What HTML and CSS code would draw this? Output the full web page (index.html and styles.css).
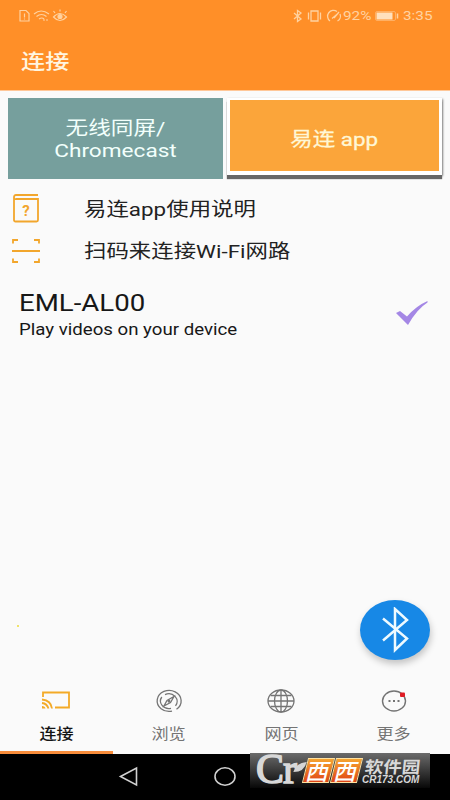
FILE: index.html
```html
<!DOCTYPE html>
<html lang="zh-CN">
<head>
<meta charset="utf-8">
<title>连接</title>
<link rel="stylesheet" href="styles.css">
</head>
<body>
<div class="screen">
  <header class="header">
    <div class="status">
      <svg class="status-left" width="50" height="14" viewBox="0 0 50 14" fill="none" stroke="currentColor" stroke-width="1.2">
        <path d="M1 1.500h6l3 3v7.500h-9zM5.500 4.500v4M5.500 9.500v1"/>
        <path d="M15 5q7-6 15 0M17.500 7.500q5-4 10 0M20 10q3-2 5 0"/>
        <path d="M24 11h6" stroke-dasharray="2 1"/>
        <path d="M34.500 8q6.500-7 13 0q-6.500 7-13 0zM36 4l-1.500-2M41 2.500v-2M46 4l1.500-2"/>
        <circle cx="41" cy="7.500" r="2" fill="currentColor"/>
      </svg>
      <div class="status-right">
        <svg width="51" height="14" viewBox="0 0 51 14" fill="none" stroke="currentColor" stroke-width="1.300">
          <path d="M2 4l7 6-3.500 2.500v-11l3.500 2.500-7 6"/>
          <path d="M19 2h7v10h-7zM16.500 3.500v7M28.500 3.500v7" />
          <path d="M38 12a5.500 5.500 0 1 1 7-9.500M48 5a5.500 5.500 0 0 1-2.500 7M40 9.500l6-5M42 9l5-6"/>
        </svg>
        <span class="battery-text"><span class="wide">92%</span></span>
        <svg class="battery" width="24" height="10" viewBox="0 0 24 10"><rect x=".5" y=".5" width="20" height="9" rx="1.500" fill="none" stroke="currentColor" opacity=".5"/><path d="M1.500 1.500h16v7h-16z" fill="#ffe0bd"/><path d="M22.500 2.500v5" stroke="currentColor" stroke-width="1.500"/></svg>
        <span class="clock"><span class="wide">3:35</span></span>
      </div>
    </div>
    <h1 class="title"><span class="wide">连接</span></h1>
  </header>

  <div class="modes">
    <div class="mode mode-cast"><span class="mid">无线同屏/<br>Chromecast</span></div>
    <div class="mode mode-app"><span class="mid">易连 app</span></div>
  </div>

  <main class="content">
    <div class="option">
      <svg class="option-icon" width="30" height="32" viewBox="0 0 30 32" fill="none" stroke="currentColor" stroke-width="1.800">
        <path d="M26 2H4q-2 0-2 2.300T4 6h22v21q0 1.500-1.500 1.500h-21Q2 28.500 2 27V4"/>
        <text x="14" y="22.500" class="question">?</text>
      </svg>
      <span class="wide">易连app使用说明</span>
    </div>
    <div class="option option-scan">
      <svg class="option-icon" width="30" height="32" viewBox="0 0 30 32" fill="none" stroke="currentColor" stroke-width="1.800">
        <path d="M1 8.500V5h5M22 5h5v3.500M1 23.500V27h5M22 27h5v-3.500M0 16h28"/>
      </svg>
      <span class="wide">扫码来连接Wi-Fi网路</span>
    </div>
    <div class="device">
      <div class="device-text">
        <div class="device-name"><span class="wide">EML-AL00</span></div>
        <div class="device-note"><span class="wide">Play videos on your device</span></div>
      </div>
      <svg class="check" width="34" height="26" viewBox="0 0 34 26"><path d="M0 12l4-2 7 5.500Q20 5 31.500 0v1.500Q21 8 12 24z" fill="#a487e5"/></svg>
    </div>
    <i class="speck"></i>
    <div class="fab">
      <svg width="28" height="46" viewBox="0 0 28 46" fill="none" stroke="#eefaff" stroke-width="2.500"><path d="M2 11.500l24 20L14 43V2l12 11L2 33.500"/></svg>
    </div>
  </main>

  <nav class="tabs">
    <div class="tab tab-active">
      <svg class="cast" width="30" height="26" viewBox="0 0 30 26" fill="none" stroke="currentColor" stroke-width="1.800"><path d="M2 9V4.500h26v15H14"/><path d="M1 11.500q9 1 10 9M1 15q5 .5 6.500 5.500"/><path d="M1 18q3 0 3.500 2.500H1z" fill="currentColor" stroke="none"/></svg>
      <span class="mid">连接</span>
    </div>
    <div class="tab">
      <svg width="30" height="26" viewBox="0 0 30 26" fill="none" stroke="currentColor" stroke-width="1.300"><path d="M18 23.100A12 10.500 0 1 1 22.500 21.200"/><path d="M7.800 9A8.500 7.500 0 0 0 17 20.300M11 6.600A8.500 7.500 0 0 1 21.500 17.800"/><path d="M20 8.500l-3.500 6-6.500 3.500 3-5.500z"/><circle cx="15" cy="13.200" r=".8"/></svg>
      <span class="mid">浏览</span>
    </div>
    <div class="tab">
      <svg width="30" height="26" viewBox="0 0 30 26" fill="none" stroke="currentColor" stroke-width="1.300"><ellipse cx="15" cy="13" rx="13" ry="11"/><ellipse cx="15" cy="13" rx="6.500" ry="11"/><path d="M15 2v22M2 13h26M4.500 7.500h21M4.500 18.500h21"/></svg>
      <span class="mid">网页</span>
    </div>
    <div class="tab">
      <svg width="30" height="26" viewBox="0 0 30 26" fill="none" stroke="currentColor" stroke-width="1.400"><ellipse cx="15" cy="13" rx="11.500" ry="10"/><path d="M9.500 13h2M14 13h2M18.500 13h2" stroke-width="2"/><rect x="21" y="4.500" width="5" height="4.500" rx="1" fill="#e01c24" stroke="none"/></svg>
      <span class="mid">更多</span>
    </div>
  </nav>

  <footer class="system">
    <svg class="system-icons" width="250" height="46" viewBox="0 0 250 46" fill="none" stroke="#d0d0d0" stroke-width="1.600"><path d="M120.500 22.500L136.500 14v17z"/><ellipse cx="225" cy="22.500" rx="10" ry="8.800"/></svg>
    <div class="watermark">
      <span class="brand-cr">Cr</span>
      <svg class="leaf" width="14" height="10" viewBox="0 0 12 9"><path d="M0 9Q2 1 12 0Q10 9 0 9" fill="#d5d5d5"/></svg>
      <span class="tile tile-one">西</span><span class="tile tile-two">西</span>
      <span class="brand-name"><span>软件园</span></span>
      <span class="brand-url"><span>CR173.COM</span></span>
    </div>
  </footer>
</div>
</body>
</html>
```
FILE: styles.css
```css
* { box-sizing: border-box; }
body { margin: 0; font-family: Roboto, "Noto Sans CJK SC", sans-serif; background: #fafafa; }
.screen { width: 450px; height: 800px; display: flex; flex-direction: column; position: relative; overflow: hidden; background: #fafafa; }
svg { display: block; flex: none; }
.wide { display: inline-block; transform: scaleX(1.18); transform-origin: left center; white-space: nowrap; }
.mid { display: inline-block; transform: scaleX(1.18); white-space: nowrap; }

.header { height: 91px; background: #ff8f28; border-bottom: 1px solid #ffc798; }
.status { height: 31px; padding: 9px 17px 0 19px; display: flex; justify-content: space-between; color: #ffd2a0; font-size: 13px; line-height: 14px; }
.status-right { display: flex; }
.battery-text { width: 32px; }
.battery { margin-top: 2px; }
.clock { width: 30px; margin-left: 4px; }
.title { margin: 14px 0 0 21px; font-size: 20.500px; line-height: 34px; font-weight: 500; color: #fff6e0; }

.modes { height: 90px; display: flex; align-items: flex-start; gap: 4px; padding: 7px 8px 0; }
.mode { display: flex; align-items: center; justify-content: center; text-align: center; font-size: 19px; line-height: 22px; }
.mode-cast { width: 215px; height: 81px; background: #769f9d; color: #f2fffc; padding-top: 3px; }
.mode-cast .mid { transform: scaleX(1.19); }
.mode-app { width: 215px; height: 77px; background: #fba53a; border: 3px solid #fff; border-top-width: 2px; border-bottom-width: 4px; color: #fff7d6; box-shadow: 0 4px 1px #666, 1px 1px 2px #888; padding-top: 8px; }
.mode-app .mid { -webkit-text-stroke: .3px currentColor; }

.content { height: 492px; position: relative; }
.option { height: 43px; display: flex; align-items: center; padding: 13px 0 0 12px; font-size: 19px; line-height: 28px; color: #222; }
.option .wide { padding-top: 2px; }
.option-scan { height: 42px; padding-top: 12px; }
.option-icon { width: 72px; height: 32px; padding-right: 42px; color: #f2a62c; }
.question { font: 700 15px Roboto, sans-serif; fill: currentColor; stroke: none; text-anchor: middle; }
.device { display: flex; justify-content: space-between; padding: 23px 20px 0 19px; color: #171717; }
.device-name { font-size: 24px; line-height: 28px; }
.device-name .wide { transform: scaleX(1.15); }
.device-note { font-size: 16px; line-height: 25px; }
.device-note .wide { transform: scaleX(1.165); }
.check { margin-top: 12px; }
.speck { position: absolute; left: 17px; top: 444px; width: 2px; height: 2px; background: #f0e36a; }
.fab { position: absolute; left: 360px; top: 419px; width: 70px; height: 60px; border-radius: 50%; background: #1788e6; display: flex; align-items: center; justify-content: center; box-shadow: 1px 4px 7px rgba(0,0,0,.22); }

.tabs { height: 81px; display: flex; }
.tab { width: 112.500px; display: flex; flex-direction: column; align-items: center; padding-top: 15px; color: #747474; font-size: 14.500px; line-height: 22px; border-bottom: 3px solid transparent; }
.tab .mid { margin-top: 10px; }
.tab-active { border-bottom-color: #f88d3b; color: #151515; font-weight: 500; }
.cast { color: #f3aa27; }

.system { height: 46px; background: #000; position: relative; }
.watermark { position: absolute; left: 250px; top: -1px; width: 180px; height: 35px; background: linear-gradient(#6b6b6b, #080808); color: #d8d8d8; white-space: nowrap; }
.watermark > * { position: absolute; }
.brand-cr { left: 6px; top: -3px; font: 400 42px/38px "Liberation Serif", serif; letter-spacing: -1px; -webkit-text-stroke: 1.500px #d8d8d8; }
.leaf { left: 43px; top: 9px; }
.tile { top: 5px; width: 27px; height: 25px; border: 1px solid #ffe2a0; background: linear-gradient(#f6a531, #e04415); color: #fff; font: 500 23px/22px "Noto Sans CJK SC", sans-serif; text-align: center; transform: skewX(-14deg); }
.tile-one { left: 55px; }
.tile-two { left: 83px; }
.brand-name { left: 115px; top: 5px; font: 700 16.500px/17px "Noto Sans CJK SC", sans-serif; transform: skewX(-6deg); }
.brand-name span { display: inline-block; transform: scaleX(1.12); transform-origin: left; }
.brand-url { left: 112px; top: 22px; font: italic 700 10px/10px "Liberation Sans", sans-serif; }
```
